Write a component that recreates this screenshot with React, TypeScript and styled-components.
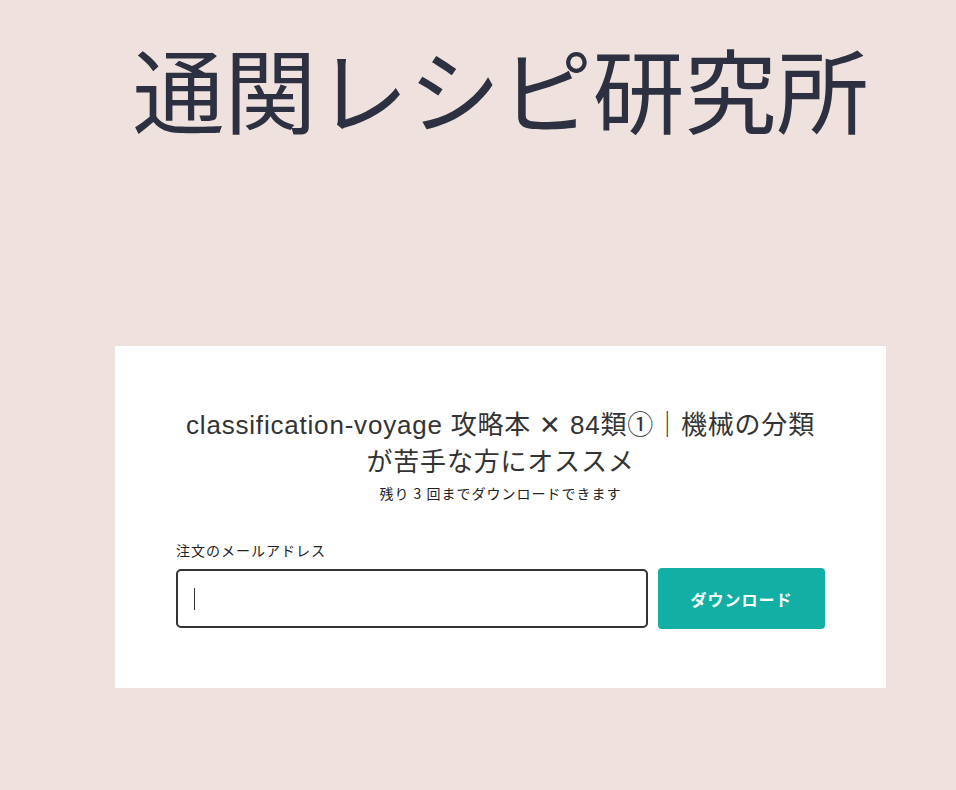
import React from "react";
import styled, { createGlobalStyle } from "styled-components";

const GlobalStyle = createGlobalStyle`
  html, body {
    margin: 0;
    padding: 0;
    background: #efe2de;
  }
  body {
    font-family: "Liberation Sans", Arial, "Noto Sans CJK JP", sans-serif;
  }
`;

const Page = styled.div`
  width: 956px;
  height: 790px;
  box-sizing: border-box;
  padding: 27px 0 0 115px;
  background: #efe2de;
  overflow: hidden;
`;

const SiteTitle = styled.h1`
  margin: 0;
  width: 771px;
  text-align: center;
  font-family: "Noto Sans CJK JP", sans-serif;
  font-weight: 400;
  font-size: 92px;
  line-height: 120px;
  color: #2c3040;
`;

const Card = styled.div`
  margin-top: 199px;
  width: 771px;
  height: 342px;
  box-sizing: border-box;
  background: #ffffff;
  padding: 61px 61px 0 61px;
  display: flex;
  flex-direction: column;
`;

const Heading = styled.h2`
  margin: 0;
  text-align: center;
  font-weight: 400;
  font-size: 26px;
  line-height: 37px;
  letter-spacing: 0.8px;
  color: #333333;
  font-family: "Liberation Sans", Arial, "Noto Sans CJK JP", sans-serif;
`;

const Remaining = styled.p`
  margin: 3px 0 0 0;
  text-align: center;
  font-size: 14px;
  line-height: 18px;
  letter-spacing: 1px;
  color: #222222;
  font-family: "Noto Sans CJK JP", sans-serif;
`;

const Label = styled.label`
  margin-top: 39px;
  font-size: 14px;
  line-height: 18px;
  letter-spacing: 1px;
  color: #222222;
  font-family: "Noto Sans CJK JP", sans-serif;
`;

const FormRow = styled.div`
  margin-top: 9px;
  display: flex;
  gap: 10px;
  align-items: center;
`;

const EmailInput = styled.div`
  width: 472px;
  height: 59px;
  box-sizing: border-box;
  border: 2px solid #333333;
  border-radius: 5px;
  display: flex;
  align-items: center;
  padding-left: 16px;
`;

const Caret = styled.span`
  width: 1px;
  height: 22px;
  background: #333333;
`;

const DownloadButton = styled.button`
  width: 167px;
  height: 61px;
  border: none;
  border-radius: 4px;
  background: #12afa5;
  color: #ffffff;
  font-family: "Noto Sans CJK JP", sans-serif;
  font-weight: 700;
  font-size: 16px;
  letter-spacing: 1px;
  cursor: pointer;
`;

export default function App() {
  return (
    <Page>
      <GlobalStyle />
      <SiteTitle>通関レシピ研究所</SiteTitle>
      <Card>
        <Heading>
          classification-voyage 攻略本 ✕ 84類①｜機械の分類
          <br />
          が苦手な方にオススメ
        </Heading>
        <Remaining>残り 3 回までダウンロードできます</Remaining>
        <Label>注文のメールアドレス</Label>
        <FormRow>
          <EmailInput>
            <Caret />
          </EmailInput>
          <DownloadButton>ダウンロード</DownloadButton>
        </FormRow>
      </Card>
    </Page>
  );
}
